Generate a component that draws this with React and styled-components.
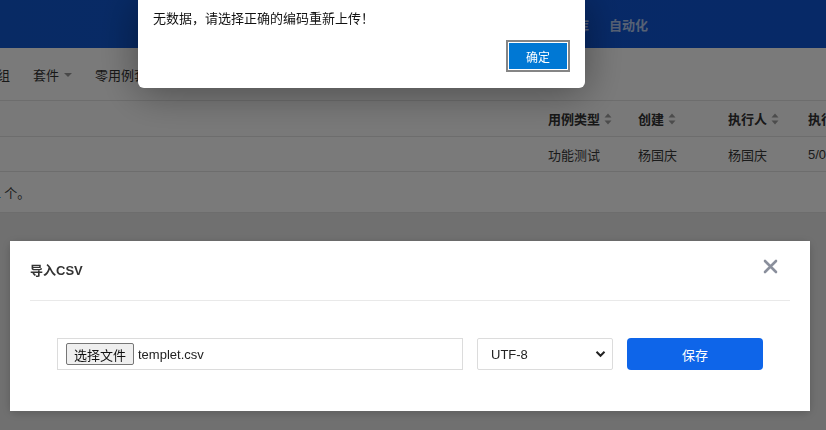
import styled, { createGlobalStyle } from "styled-components";

const GlobalStyle = createGlobalStyle`
  html, body {
    margin: 0;
    padding: 0;
    width: 826px;
    height: 430px;
    overflow: hidden;
    background: #ebebeb;
    font-family: "Liberation Sans", Arial, "Noto Sans CJK SC", sans-serif;
    font-size: 13px;
    color: #333;
  }
  * { box-sizing: border-box; }
`;

const navItems = ["首页", "项目", "测试计划", "用例库", "自动化"];
const tabs = [
  { label: "分组", caret: false },
  { label: "套件", caret: true },
  { label: "零用例套件", caret: false },
];
const columns = ["", "用例类型", "创建", "执行人", "执行时间"];
const rowData = ["", "功能测试", "杨国庆", "杨国庆", "5/05/2022"];

const SortIcon = () => (
  <svg width="8" height="12" viewBox="0 0 8 12">
    <path d="M4 0.5 L7.5 4.5 H0.5 Z" fill="#a0a0a0" />
    <path d="M4 11.5 L7.5 7.5 H0.5 Z" fill="#a0a0a0" />
  </svg>
);

const App = () => {
  return (
    <>
      <GlobalStyle />
      <Page>
        <TopNav>
          <NavMenu>
            {navItems.map((item) => (
              <NavItem key={item}>{item}</NavItem>
            ))}
          </NavMenu>
        </TopNav>
        <SubNav>
          {tabs.map((t, i) => (
            <Tab key={t.label} $first={i === 0}>
              {t.label}
              {t.caret && <Caret />}
            </Tab>
          ))}
        </SubNav>
        <Table>
          <HeadRow>
            {columns.map((c, i) => (
              <HeadCell key={i}>
                {c}
                {c && i < 4 && <SortIcon />}
              </HeadCell>
            ))}
          </HeadRow>
          <BodyRow>
            {rowData.map((c, i) => (
              <Cell key={i}>{c}</Cell>
            ))}
          </BodyRow>
        </Table>
        <Footer>
          <FooterText>
            共<Count>1</Count>个。
          </FooterText>
        </Footer>
      </Page>

      <Backdrop />

      <Modal>
        <ModalHeader>
          <ModalTitle>导入CSV</ModalTitle>
          <CloseBtn>
            <svg width="15" height="15" viewBox="0 0 15 15">
              <path
                d="M2 2 L13 13 M13 2 L2 13"
                stroke="#8a8f9c"
                strokeWidth="2.6"
                strokeLinecap="round"
              />
            </svg>
          </CloseBtn>
        </ModalHeader>
        <ModalBody>
          <FileBox>
            <FileButton>选择文件</FileButton>
            <FileName>templet.csv</FileName>
          </FileBox>
          <SelectBox>
            <span>UTF-8</span>
            <svg width="11" height="8" viewBox="0 0 11 8">
              <path
                d="M1.5 1.8 L5.5 5.8 L9.5 1.8"
                stroke="#222"
                strokeWidth="2"
                fill="none"
              />
            </svg>
          </SelectBox>
          <SaveButton>保存</SaveButton>
        </ModalBody>
      </Modal>

      <Alert>
        <AlertText>无数据，请选择正确的编码重新上传！</AlertText>
        <AlertActions>
          <OkButton>确定</OkButton>
        </AlertActions>
      </Alert>
    </>
  );
};

export default App;

const Page = styled.div`
  width: 826px;
  height: 430px;
  background: #ebebeb;
`;

const TopNav = styled.div`
  height: 48px;
  background: linear-gradient(90deg, #1159d2 0%, #1056d8 100%);
  display: flex;
  align-items: center;
`;

const NavMenu = styled.div`
  display: flex;
  gap: 20px;
  padding-left: 386px;
`;

const NavItem = styled.div`
  font-family: "Noto Sans CJK SC", sans-serif;
  font-size: 13px;
  font-weight: 700;
  color: rgba(255, 255, 255, 0.7);
`;

const SubNav = styled.div`
  height: 52px;
  background: #fff;
  display: flex;
  align-items: center;
  gap: 23px;
  overflow: hidden;
`;

const Tab = styled.div`
  display: flex;
  align-items: center;
  gap: 5px;
  font-family: "Noto Sans CJK SC", sans-serif;
  font-size: 13px;
  color: #333;
  white-space: nowrap;
  margin-left: ${(p) => (p.$first ? "-16px" : "0")};
`;

const Caret = styled.span`
  width: 0;
  height: 0;
  border-left: 4px solid transparent;
  border-right: 4px solid transparent;
  border-top: 4px solid #999;
  margin-top: 2px;
`;

const Table = styled.div`
  background: #fff;
  border-top: 1px solid #e4e4e4;
`;

const gridCols = "548px 90px 90px 80px 1fr";

const HeadRow = styled.div`
  display: grid;
  grid-template-columns: ${gridCols};
  height: 36px;
  border-bottom: 1px solid #e4e4e4;
  background: #fdfdfd;
`;

const HeadCell = styled.div`
  display: flex;
  align-items: center;
  gap: 4px;
  font-family: "Noto Sans CJK SC", sans-serif;
  font-weight: 700;
  font-size: 13px;
  color: #333;
  white-space: nowrap;
  overflow: hidden;
`;

const BodyRow = styled.div`
  display: grid;
  grid-template-columns: ${gridCols};
  height: 35px;
  border-bottom: 1px solid #e4e4e4;
`;

const Cell = styled.div`
  display: flex;
  align-items: center;
  font-family: "Liberation Sans", "Noto Sans CJK SC", sans-serif;
  font-size: 13px;
  color: #3a3a3a;
  white-space: nowrap;
  overflow: hidden;
`;

const Footer = styled.div`
  height: 41px;
  background: #fff;
  border-bottom: 1px solid #e4e4e4;
  display: flex;
  align-items: center;
  overflow: hidden;
`;

const FooterText = styled.div`
  margin-left: -19px;
  font-family: "Noto Sans CJK SC", sans-serif;
  font-size: 13px;
  color: #444;
  white-space: nowrap;
`;

const Count = styled.span`
  color: #1a5fd6;
  padding: 0 3px 0 0;
`;

const Backdrop = styled.div`
  position: fixed;
  inset: 0;
  background: rgba(0, 0, 0, 0.52);
`;

const Modal = styled.div`
  position: fixed;
  left: 10px;
  top: 241px;
  width: 800px;
  height: 170px;
  background: #fff;
  padding: 0 20px;
  box-shadow: 0 2px 10px rgba(0, 0, 0, 0.2);
`;

const ModalHeader = styled.div`
  height: 60px;
  display: flex;
  align-items: center;
  justify-content: space-between;
  border-bottom: 1px solid #e9e9e9;
  padding-bottom: 2px;
`;

const ModalTitle = styled.div`
  font-family: "Liberation Sans", "Noto Sans CJK SC", sans-serif;
  font-size: 13px;
  font-weight: 700;
  color: #333;
`;

const CloseBtn = styled.div`
  width: 15px;
  height: 15px;
  margin-right: 12px;
  margin-bottom: 6px;
  display: flex;
`;

const ModalBody = styled.div`
  display: flex;
  gap: 14px;
  padding: 37px 27px 0;
`;

const FileBox = styled.div`
  width: 406px;
  height: 32px;
  border: 1px solid #dcdcdc;
  display: flex;
  align-items: center;
  padding-left: 8px;
  gap: 4px;
`;

const FileButton = styled.div`
  height: 22px;
  width: 68px;
  border: 1px solid #767676;
  border-radius: 2px;
  background: #efefef;
  display: flex;
  align-items: center;
  justify-content: center;
  font-family: "Noto Sans CJK SC", sans-serif;
  font-size: 13px;
  color: #111;
`;

const FileName = styled.span`
  font-family: "Liberation Sans", Arial, sans-serif;
  font-size: 13px;
  color: #222;
`;

const SelectBox = styled.div`
  width: 136px;
  height: 32px;
  border: 1px solid #dcdcdc;
  border-radius: 2px;
  display: flex;
  align-items: center;
  justify-content: space-between;
  padding: 0 6px 0 13px;
  font-family: "Liberation Sans", Arial, sans-serif;
  font-size: 13px;
  color: #222;
`;

const SaveButton = styled.div`
  width: 136px;
  height: 32px;
  border-radius: 4px;
  background: #0e65e9;
  color: #fff;
  display: flex;
  align-items: center;
  justify-content: center;
  font-family: "Noto Sans CJK SC", sans-serif;
  font-size: 13px;
`;

const Alert = styled.div`
  position: fixed;
  left: 138px;
  top: 0;
  width: 447px;
  height: 88px;
  background: #fff;
  border-radius: 0 0 6px 6px;
  box-shadow: 0 4px 40px rgba(0, 0, 0, 0.4);
  padding: 9px 18px 0 15px;
  display: flex;
  flex-direction: column;
`;

const AlertText = styled.div`
  font-family: "Noto Sans CJK SC", sans-serif;
  font-size: 13px;
  line-height: 18px;
  color: #111;
`;

const AlertActions = styled.div`
  display: flex;
  justify-content: flex-end;
  margin-top: 16px;
`;

const OkButton = styled.div`
  width: 58px;
  height: 26px;
  background: #0078d4;
  color: #fff;
  display: flex;
  align-items: center;
  justify-content: center;
  font-family: "Noto Sans CJK SC", sans-serif;
  font-size: 12px;
  outline: 2px solid #858585;
  outline-offset: 1px;
`;
